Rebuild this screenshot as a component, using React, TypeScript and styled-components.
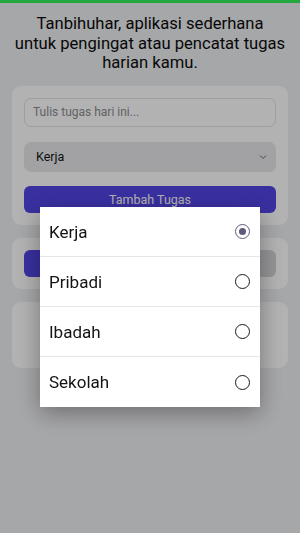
import styled, { createGlobalStyle } from "styled-components";

// --- 전역 ---
const GlobalStyle = createGlobalStyle`
  html, body {
    margin: 0;
    padding: 0;
    background: #eeeff2;
    font-family: Roboto, "Noto Sans", "Liberation Sans", sans-serif;
  }
  * { box-sizing: border-box; }
`;

const PRIMARY = "#5245e6";

const TopBar = styled.div`
  position: fixed;
  top: 0;
  left: 0;
  right: 0;
  height: 3px;
  background: #22a83f;
  z-index: 30;
`;

const Page = styled.div`
  min-height: 533px;
  padding: 14px 12px 20px;
  display: flex;
  flex-direction: column;
  gap: 13px;
`;

const Title = styled.h1`
  margin: 0 -12px;
  font-size: 16.6px;
  line-height: 19.5px;
  font-weight: 400;
  text-align: center;
  white-space: nowrap;
  color: #0b0b0b;
`;

const Card = styled.div<{ $minH?: string }>`
  background: #fff;
  border-radius: 9px;
  padding: 12px;
  min-height: ${(p) => p.$minH || "auto"};
  display: flex;
  flex-direction: column;
  gap: 15px;
`;

const Input = styled.input`
  height: 29px;
  flex-shrink: 0;
  border: 1px solid #e3e3e6;
  border-radius: 7px;
  padding: 0 8px;
  font-family: inherit;
  font-size: 12px;
  color: #222;
  background: #fff;
  outline: none;

  &::placeholder {
    color: #8d8d91;
  }
`;

const SelectBox = styled.div`
  height: 30px;
  flex-shrink: 0;
  border-radius: 7px;
  background: #e9e9eb;
  padding: 0 8px 0 12px;
  display: flex;
  align-items: center;
  justify-content: space-between;
  font-size: 12.5px;
  color: #161616;
`;

const Button = styled.button<{ $tone?: "primary" | "muted" }>`
  height: 27px;
  flex-shrink: 0;
  margin-top: -1px;
  border: none;
  border-radius: 6px;
  background: ${(p) => (p.$tone === "muted" ? "#d5d5d8" : PRIMARY)};
  color: ${(p) => (p.$tone === "muted" ? "#333" : "#fff")};
  font-family: inherit;
  font-size: 12.5px;
`;

const FilterRow = styled.div`
  display: flex;
  gap: 10px;

  & > ${Button} {
    flex: 1;
    margin-top: 0;
  }
`;

const Dim = styled.div`
  position: fixed;
  inset: 0;
  background: rgba(0, 0, 0, 0.3);
  z-index: 10;
`;

const Dialog = styled.div`
  position: fixed;
  top: 207px;
  left: 40px;
  width: 220px;
  background: #fff;
  z-index: 20;
  box-shadow: 0 6px 22px rgba(0, 0, 0, 0.35);
`;

const Option = styled.div`
  height: 50px;
  padding: 0 10px 0 9px;
  display: flex;
  align-items: center;
  justify-content: space-between;
  font-size: 17px;
  color: #141414;
  border-bottom: 1px solid #e6e6e6;

  &:last-child {
    border-bottom: none;
  }
`;

const Radio = styled.span<{ $on?: boolean }>`
  width: 15px;
  height: 15px;
  border-radius: 50%;
  border: 1.6px solid ${(p) => (p.$on ? "#5f5a7d" : "#1a1a1a")};
  display: flex;
  align-items: center;
  justify-content: center;

  &::after {
    content: "";
    width: 7px;
    height: 7px;
    border-radius: 50%;
    background: #5f5a7d;
    display: ${(p) => (p.$on ? "block" : "none")};
  }
`;

const options = ["Kerja", "Pribadi", "Ibadah", "Sekolah"];

function App() {
  return (
    <>
      <GlobalStyle />
      <TopBar />
      <Page>
        <Title>
          Tanbihuhar, aplikasi sederhana
          <br />
          untuk pengingat atau pencatat tugas
          <br />
          harian kamu.
        </Title>

        <Card>
          <Input placeholder="Tulis tugas hari ini..." />
          <SelectBox>
            Kerja
            <svg width="10" height="10" viewBox="0 0 10 10">
              <path d="M2 3.5l3 3 3-3" fill="none" stroke="#666" strokeWidth="1" />
            </svg>
          </SelectBox>
          <Button>Tambah Tugas</Button>
        </Card>

        <Card>
          <FilterRow>
            <Button aria-label="Semua" />
            <Button $tone="muted" aria-label="Selesai" />
          </FilterRow>
        </Card>

        <Card $minH="66px" />
      </Page>

      <Dim />
      <Dialog>
        {options.map((o, i) => (
          <Option key={o}>
            {o}
            <Radio $on={i === 0} />
          </Option>
        ))}
      </Dialog>
    </>
  );
}

export default App;
